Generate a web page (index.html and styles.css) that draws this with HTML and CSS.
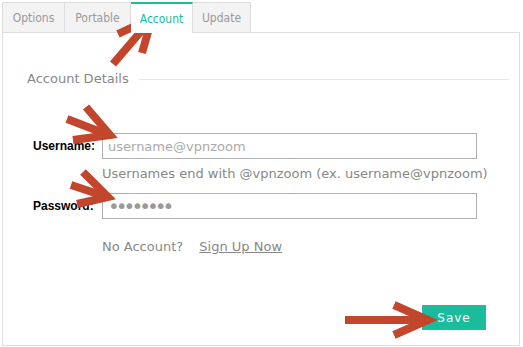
FILE: index.html
```html
<!DOCTYPE html>
<html lang="en">
<head>
  <meta charset="UTF-8" />
  <meta name="viewport" content="width=device-width, initial-scale=1" />
  <title>Account Settings</title>
  <link rel="stylesheet" href="styles.css">
</head>
<body>

  <div class="page">
    <ul class="tabs">
      <li class="tab-options">Options</li>
      <li class="tab-portable">Portable</li>
      <li class="tab-account active">Account</li>
      <li class="tab-update">Update</li>
    </ul>

    <div class="panel">
      <div class="legend">
        <span>Account Details</span>
        <i class="rule"></i>
      </div>

      <form class="account-form">
        <label for="user">Username:</label>
        <input type="text" id="user" placeholder="username@vpnzoom" />
        <p class="hint">Usernames end with @vpnzoom (ex. username@vpnzoom)</p>
        <label for="pass">Password:</label>
        <input type="password" id="pass" class="pass-input" value="12345678" />
        <p class="signup">No Account? <a href="#">Sign Up Now</a></p>
      </form>

      <div class="actions">
        <button type="button">Save</button>
      </div>
    </div>

    <!-- callout arrows drawn over the form -->
    <svg class="arrows" width="523" height="347" viewBox="0 0 523 347">
      <g fill="none" stroke="#c1462c" stroke-width="8" stroke-linejoin="miter" stroke-miterlimit="10">
        <path d="M113 64 L149 22" />
        <path d="M118 34 L152 18 L142 53" />
        <path d="M67 119 L106 134" />
        <path d="M86 107 L110 135 L73 140" />
        <path d="M71 185 L104 196" />
        <path d="M83 172 L108 197 L77 204" />
        <path d="M345 320 L426 320" />
        <path d="M394 305 L428 320 L394 335" />
      </g>
    </svg>
  </div>

</body>
</html>
```

FILE: styles.css
```css
* {
  box-sizing: border-box;
}

body {
  margin: 0;
  background: #fff;
  font-family: "DejaVu Sans", Verdana, sans-serif;
  color: #888;
}

.page {
  position: relative;
  width: 523px;
  height: 347px;
  padding: 2px 0 0 2px;
}

.tabs {
  list-style: none;
  margin: 0;
  padding: 0;
  display: flex;
  height: 30px;
}

.tabs li {
  height: 30px;
  display: flex;
  align-items: center;
  justify-content: center;
  font-family: "DejaVu Sans Condensed", "DejaVu Sans", sans-serif;
  font-size: 12px;
  color: #999;
  background: #f3f3f3;
  border: 1px solid #ddd;
  border-left: none;
  border-bottom: none;
}

.tabs li:first-child {
  border-left: 1px solid #ddd;
}

.tab-options { width: 63px; }
.tab-portable { width: 66px; }
.tab-account { width: 62px; }
.tab-update { width: 58px; }

.tabs li.active {
  background: #fff;
  color: #1abc9c;
  border-top: 2px solid #1abc9c;
  height: 31px;
  margin-bottom: -1px;
  position: relative;
  z-index: 1;
}

.panel {
  width: 518px;
  height: 314px;
  border: 1px solid #ddd;
  padding: 38px 10px 0 24px;
}

.legend {
  display: flex;
  align-items: center;
  gap: 10px;
  font-size: 13px;
  line-height: 16px;
  color: #888;
}

.legend .rule {
  flex: 1;
  height: 1px;
  background: #e4e4e4;
}

.account-form {
  display: grid;
  grid-template-columns: 69px 375px;
  align-items: center;
  margin: 46px 0 0 6px;
}

.account-form label {
  font-family: "Liberation Sans", Arial, sans-serif;
  font-weight: bold;
  font-size: 12px;
  color: #000;
}

.account-form input {
  height: 26px;
  border: 1px solid #b0b0b0;
  padding: 0 5px;
  font-family: "DejaVu Sans", Verdana, sans-serif;
  font-size: 13px;
  color: #999;
  outline: none;
}

.account-form input::placeholder {
  color: #aaa;
}

.account-form .pass-input {
  font-size: 20px;
  letter-spacing: -4px;
  color: #9a9a9a;
}

.hint, .signup {
  grid-column: 2;
  margin: 0;
  font-size: 13px;
  line-height: 16px;
  color: #888;
  white-space: nowrap;
}

.hint {
  margin: 7px 0 11px;
}

.signup {
  margin-top: 20px;
}

.signup a {
  color: #888;
  margin-left: 12px;
}

.actions {
  display: flex;
  justify-content: flex-end;
  margin-top: 50px;
  padding-right: 23px;
}

.actions button {
  width: 64px;
  height: 25px;
  background: #1abc9c;
  border: 1px solid #35a9c9;
  color: #fff;
  font-family: "DejaVu Sans", Verdana, sans-serif;
  font-size: 12px;
  letter-spacing: 1px;
}

.arrows {
  position: absolute;
  top: 0;
  left: 0;
  pointer-events: none;
}
```
